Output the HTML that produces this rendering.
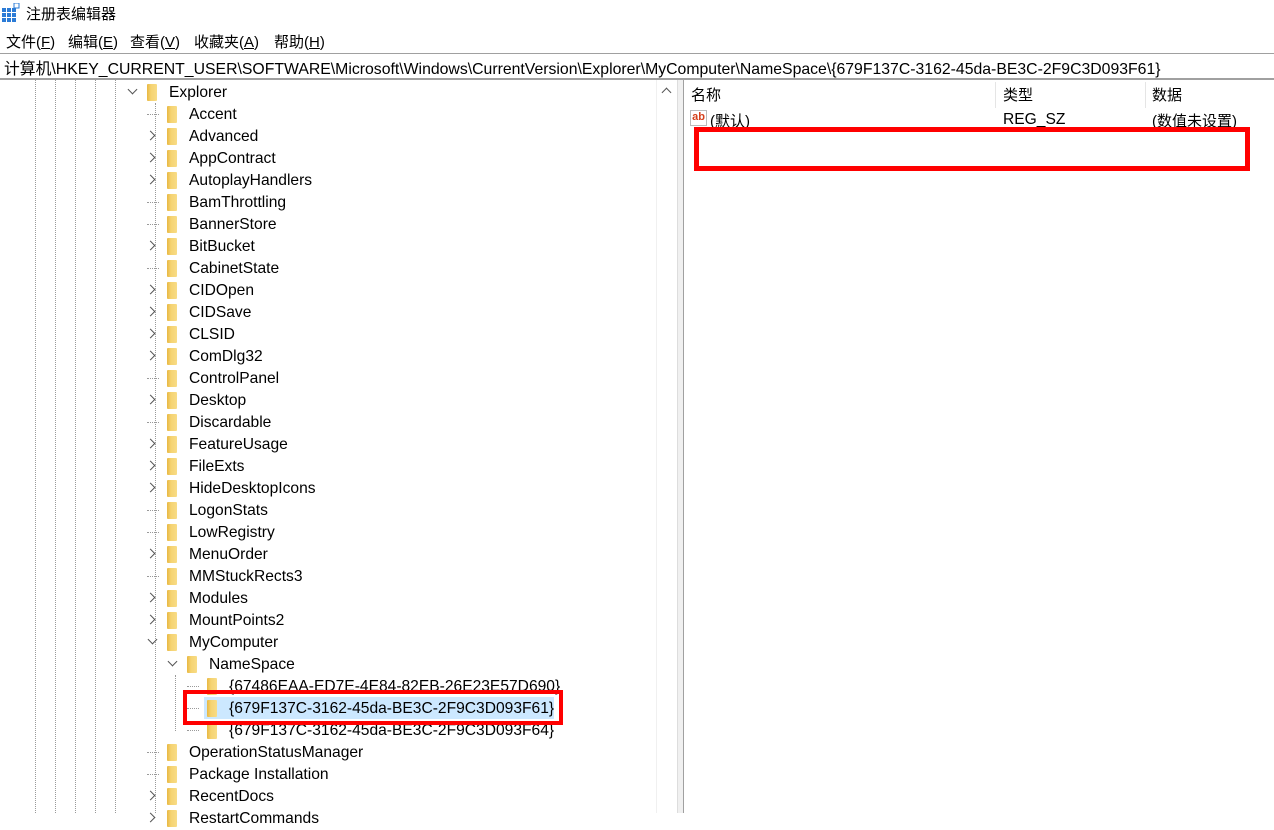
<!DOCTYPE html>
<html><head><meta charset="utf-8">
<style>
*{margin:0;padding:0;box-sizing:border-box}
body{width:1274px;height:813px;overflow:hidden;background:#fff;font-family:"Liberation Sans","Noto Sans CJK SC",sans-serif;font-size:15px;color:#000;position:relative}
.a{position:absolute;white-space:nowrap}
.row{position:absolute;height:22px;line-height:22px;font-size:15.6px}
.fold{position:absolute;width:10px;height:17px;background:linear-gradient(90deg,#e8b842 0,#f5d372 40%,#f8dc86 100%);border-radius:1px}
.vl{position:absolute;top:80px;bottom:0;width:0;border-left:1px dotted #9a9a9a}
.hl{position:absolute;height:0;border-top:1px dotted #9a9a9a}
.chev{position:absolute;width:7px;height:7px;border-right:1.6px solid #555;border-bottom:1.6px solid #555}
</style></head><body>
<svg class="a" style="left:2px;top:3px" width="18" height="20" viewBox="0 0 18 20"><g fill="#2b7bd6"><rect x="0" y="5" width="4" height="4"/><rect x="5" y="5" width="4" height="4"/><rect x="10" y="5" width="4" height="4"/><rect x="0" y="10" width="4" height="4"/><rect x="5" y="10" width="4" height="4"/><rect x="10" y="10" width="4" height="4"/><rect x="0" y="15" width="4" height="4"/><rect x="5" y="15" width="4" height="4"/><rect x="10" y="15" width="4" height="4"/></g><rect x="12" y="0" width="5" height="5" fill="#fff" stroke="#2b7bd6"/></svg>
<div class="a" style="left:26px;top:3px;font-size:15px">注册表编辑器</div>
<div class="a" style="left:6px;top:31px">文件(<u>F</u>)</div>
<div class="a" style="left:68px;top:31px">编辑(<u>E</u>)</div>
<div class="a" style="left:130px;top:31px">查看(<u>V</u>)</div>
<div class="a" style="left:194px;top:31px">收藏夹(<u>A</u>)</div>
<div class="a" style="left:274px;top:31px">帮助(<u>H</u>)</div>
<div class="a" style="left:0;top:53px;width:1274px;height:1px;background:#a0a0a0"></div>
<div class="a" style="left:4px;top:56px;font-size:15.8px">计算机\HKEY_CURRENT_USER\SOFTWARE\Microsoft\Windows\CurrentVersion\Explorer\MyComputer\NameSpace\{679F137C-3162-45da-BE3C-2F9C3D093F61}</div>
<div class="a" style="left:0;top:78px;width:1274px;height:2px;background:#a0a0a0"></div>
<div class="vl" style="left:35px"></div><div class="vl" style="left:55px"></div><div class="vl" style="left:75px"></div><div class="vl" style="left:95px"></div><div class="vl" style="left:115px"></div>
<div class="vl" style="left:155px;top:103px"></div>
<div class="a" style="left:175px;top:675px;height:56px;border-left:1px dotted #9a9a9a"></div>
<div class="a" style="left:656px;top:80px;width:21px;height:733px;background:#fff;border-left:1px solid #f0f0f0"></div>
<div class="chev" style="left:663px;top:89px;transform:rotate(-135deg)"></div>
<div class="a" style="left:677px;top:80px;width:1px;height:733px;background:#ddd"></div>
<div class="a" style="left:678px;top:80px;width:5px;height:733px;background:#f0f0f0"></div>
<div class="a" style="left:683px;top:80px;width:1px;height:733px;background:#a0a0a0"></div>
<div class="a" style="left:204px;top:697px;width:350px;height:22px;background:#cce8ff"></div>
<div id="tree"></div>
<div class="a" style="left:183px;top:690px;width:380px;height:35px;border:4px solid #ff0000"></div>
<div class="a" style="left:691px;top:84px">名称</div>
<div class="a" style="left:995px;top:82px;width:1px;height:26px;background:#e5e5e5"></div>
<div class="a" style="left:1003px;top:84px">类型</div>
<div class="a" style="left:1145px;top:82px;width:1px;height:26px;background:#e5e5e5"></div>
<div class="a" style="left:1152px;top:84px">数据</div>
<div class="a" style="left:690px;top:110px;width:17px;height:16px;border:1px solid #bbb;background:#fff;color:#d5401c;font-size:11px;font-weight:bold;line-height:12px;text-align:center">ab</div>
<div class="a" style="left:710px;top:110px">(默认)</div>
<div class="a" style="left:1003px;top:111px;font-size:15.6px">REG_SZ</div>
<div class="a" style="left:1152px;top:110px">(数值未设置)</div>
<div class="a" style="left:694px;top:127px;width:556px;height:44px;border:5px solid #ff0000"></div>
<script>
var rows=[["Explorer",0,"v"],["Accent",1,""],["Advanced",1,">"],["AppContract",1,">"],["AutoplayHandlers",1,">"],["BamThrottling",1,""],["BannerStore",1,""],["BitBucket",1,">"],["CabinetState",1,""],["CIDOpen",1,">"],["CIDSave",1,">"],["CLSID",1,">"],["ComDlg32",1,">"],["ControlPanel",1,""],["Desktop",1,">"],["Discardable",1,""],["FeatureUsage",1,">"],["FileExts",1,">"],["HideDesktopIcons",1,">"],["LogonStats",1,""],["LowRegistry",1,""],["MenuOrder",1,">"],["MMStuckRects3",1,""],["Modules",1,">"],["MountPoints2",1,">"],["MyComputer",1,"v"],["NameSpace",2,"v"],["{67486EAA-ED7E-4E84-82EB-26E23E57D690}",3,""],["{679F137C-3162-45da-BE3C-2F9C3D093F61}",3,""],["{679F137C-3162-45da-BE3C-2F9C3D093F64}",3,""],["OperationStatusManager",1,""],["Package Installation",1,""],["RecentDocs",1,">"],["RestartCommands",1,">"]];
var h="";
rows.forEach(function(r,i){
 var cy=92+22*i, fx=147+20*r[1], tx=169+20*r[1];
 if(r[1]==3){fx=207;tx=229;}
 h+='<div class="fold" style="left:'+fx+'px;top:'+(cy-8)+'px"></div>';
 h+='<div class="row" style="left:'+tx+'px;top:'+(cy-10)+'px">'+r[0]+'</div>';
 var cx=fx-14;
 if(r[2]=="v")h+='<div class="chev" style="left:'+(cx-4)+'px;top:'+(cy-6)+'px;transform:rotate(45deg)"></div>';
 else if(r[2]==">")h+='<div class="chev" style="left:'+(cx-6)+'px;top:'+(cy-4)+'px;transform:rotate(-45deg)"></div>';
 else h+='<div class="hl" style="left:'+(cx-6)+'px;top:'+cy+'px;width:12px"></div>';
});
document.getElementById("tree").innerHTML=h;
</script>
</body></html>
